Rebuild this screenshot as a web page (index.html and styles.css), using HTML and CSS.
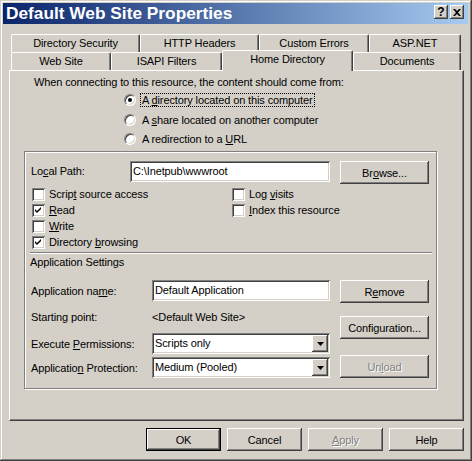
FILE: index.html
```html
<!DOCTYPE html>
<html>
<head>
<meta charset="utf-8">
<link rel="stylesheet" href="styles.css">
</head>
<body>
<div class="window">
  <div class="titlebar">
    <span class="title">Default Web Site Properties</span>
    <div class="cap-btns">
      <span class="cap-btn help">?</span>
      <span class="cap-btn"><svg width="8" height="7" viewBox="0 0 8 7"><path d="M0 0h2l2 2 2-2h2L5 3.5 8 7H6L4 5 2 7H0l3-3.5z" fill="#000"/></svg></span>
    </div>
  </div>

  <div class="tabctl">
    <div class="tab-row">
      <div class="tab w-ds">Directory Security</div>
      <div class="tab w-hh">HTTP Headers</div>
      <div class="tab w-ce">Custom Errors</div>
      <div class="tab w-asp">ASP.NET</div>
    </div>
    <div class="tab-row front">
      <div class="tab w-ws">Web Site</div>
      <div class="tab w-isapi">ISAPI Filters</div>
      <div class="tab w-home selected">Home Directory</div>
      <div class="tab w-docs">Documents</div>
    </div>

    <div class="panel">
      <div class="intro">When connecting to this resource, the content should come from:</div>
      <div class="radios">
        <div class="radio-row r1"><span class="radio on"></span><span class="rlabel focus">A <u>d</u>irectory located on this computer</span></div>
        <div class="radio-row r2"><span class="radio"></span><span class="rlabel">A <u>s</u>hare located on another computer</span></div>
        <div class="radio-row r3"><span class="radio"></span><span class="rlabel">A redirection to a <u>U</u>RL</span></div>
      </div>

      <div class="group">
        <div class="path-row">
          <span class="path-label">Lo<u>c</u>al Path:</span>
          <div class="textbox path-box">C:\Inetpub\wwwroot</div>
          <div class="btn side-btn">Br<u>o</u>wse...</div>
        </div>

        <div class="checks">
          <div class="check"><span class="box"></span><span>Scrip<u>t</u> source access</span></div>
          <div class="check"><span class="box on"><svg width="13" height="13" viewBox="0 0 13 13"><path d="M3 5l2 2 4-4v2l-4 4-2-2z" fill="#000"/></svg></span><span><u>R</u>ead</span></div>
          <div class="check"><span class="box"></span><span><u>W</u>rite</span></div>
          <div class="check"><span class="box on"><svg width="13" height="13" viewBox="0 0 13 13"><path d="M3 5l2 2 4-4v2l-4 4-2-2z" fill="#000"/></svg></span><span>Directory <u>b</u>rowsing</span></div>
          <div class="check"><span class="box"></span><span>Log <u>v</u>isits</span></div>
          <div class="check"><span class="box"></span><span><u>I</u>ndex this resource</span></div>
        </div>

        <div class="separator"></div>
        <div class="section-title">Application Settings</div>

        <div class="settings">
          <div class="set-fields">
            <div class="set-row">
              <span class="set-label">Application na<u>m</u>e:</span>
              <div class="textbox set-box">Default Application</div>
            </div>
            <div class="set-row tall">
              <span class="set-label">Starting point:</span>
              <span class="set-value">&lt;Default Web Site&gt;</span>
            </div>
            <div class="set-row">
              <span class="set-label">Execute <u>P</u>ermissions:</span>
              <div class="combo set-box"><span class="combo-text">Scripts only</span><span class="combo-btn"><svg width="7" height="4" viewBox="0 0 7 4"><path d="M0 0h7L3.5 4z" fill="#000"/></svg></span></div>
            </div>
            <div class="set-row gap3">
              <span class="set-label">Applicatio<u>n</u> Protection:</span>
              <div class="combo set-box"><span class="combo-text">Medium (Pooled)</span><span class="combo-btn"><svg width="7" height="4" viewBox="0 0 7 4"><path d="M0 0h7L3.5 4z" fill="#000"/></svg></span></div>
            </div>
          </div>
          <div class="set-buttons">
            <div class="btn side-btn">R<u>e</u>move</div>
            <div class="btn side-btn config">Confi<u>g</u>uration...</div>
            <div class="btn side-btn unload disabled">Un<u>l</u>oad</div>
          </div>
        </div>
      </div>
    </div>
  </div>

  <div class="dlg-buttons">
    <div class="btn dlg-btn default">OK</div>
    <div class="btn dlg-btn">Cancel</div>
    <div class="btn dlg-btn disabled"><u>A</u>pply</div>
    <div class="btn dlg-btn">Help</div>
  </div>
</div>
</body>
</html>
```
FILE: styles.css
```css
* { box-sizing: border-box; }
html, body { margin: 0; padding: 0; }
body {
  width: 472px;
  height: 461px;
  overflow: hidden;
  background: #D4D0C8;
  font-family: "Liberation Sans", Arial, sans-serif;
  font-size: 11px;
  letter-spacing: -0.12px;
  color: #000;
}
u { text-decoration: underline; text-underline-offset: 1px; }

.window {
  width: 472px;
  height: 461px;
  padding: 3px 4px 4px 3px;
  background: #D4D0C8;
  box-shadow: inset -1px -1px 0 #404040, inset 1px 1px 0 #D4D0C8,
              inset -2px -2px 0 #808080, inset 2px 2px 0 #fff;
  display: flex;
  flex-direction: column;
}

/* title bar */
.titlebar {
  height: 21px;
  display: flex;
  align-items: flex-start;
  padding: 0 4px 0 3px;
  background: linear-gradient(to right, #0A246A, #A6CAF0);
}
.title {
  flex: 1;
  color: #fff;
  font-weight: bold;
  font-size: 17.3px;
  letter-spacing: 0;
  line-height: 21px;
  white-space: nowrap;
}
.cap-btns { display: flex; gap: 2px; margin-top: 2px; }
.cap-btn {
  width: 14px;
  height: 14px;
  background: #D4D0C8;
  box-shadow: inset -1px -1px 0 #404040, inset 1px 1px 0 #fff,
              inset -2px -2px 0 #808080;
  display: flex;
  align-items: center;
  justify-content: center;
}
.cap-btn.help { font-weight: bold; font-size: 12px; line-height: 14px; letter-spacing: 0; }

/* tabs */
.tabctl { margin: 10px 0 0 6px; width: 455px; }
.tab-row { display: flex; align-items: flex-end; padding-left: 2px; }
.tab {
  height: 18px;
  border-top: 1px solid #fff;
  border-left: 1px solid #fff;
  border-right: 1px solid #404040;
  border-radius: 2px 2px 0 0;
  box-shadow: inset -1px 0 0 #808080;
  background: #D4D0C8;
  text-align: center;
  line-height: 17px;
  white-space: nowrap;
}
.tab.selected {
  height: 21px;
  margin-top: -2px;
  margin-bottom: -1px;
  position: relative;
  z-index: 2;
  line-height: 17px;
}
.w-ds { width: 129px; }
.w-hh { width: 119px; }
.w-ce { width: 110px; }
.w-asp { width: 92px; }
.w-ws { width: 100px; }
.w-isapi { width: 111px; }
.w-home { width: 131px; }
.w-docs { width: 108px; }

.panel {
  height: 351px;
  border-top: 1px solid #fff;
  border-left: 1px solid #fff;
  border-right: 1px solid #404040;
  border-bottom: 1px solid #404040;
  box-shadow: inset -1px -1px 0 #808080;
}
.intro { padding: 5px 0 0 24px; line-height: 13px; }

.radios { padding-left: 114px; }
.radio-row { display: flex; align-items: center; height: 14px; gap: 4px; }
.r1 { margin-top: 4px; }
.r2 { margin-top: 6px; }
.r3 { margin-top: 5px; }
.radio {
  position: relative;
  width: 12px;
  height: 12px;
  border-radius: 50%;
  background: #fff;
  border: 1px solid;
  border-color: #808080 #fff #fff #808080;
  box-shadow: inset 1px 1px 0 #404040, inset -1px -1px 0 #D4D0C8;
}
.radio.on::after {
  content: "";
  position: absolute;
  left: 3px;
  top: 3px;
  width: 4px;
  height: 4px;
  border-radius: 50%;
  background: #000;
}
.rlabel {
  border: 1px solid transparent;
  padding: 0 1px;
  line-height: 12px;
  white-space: nowrap;
}
.rlabel.focus { border: 1px dotted #000; }

/* group box */
.group {
  margin: 5px 0 0 14px;
  width: 413px;
  border: 1px solid #808080;
  box-shadow: inset 1px 1px 0 #fff, 1px 1px 0 #fff;
  padding-bottom: 10px;
}
.path-row { display: flex; align-items: flex-start; margin: 9px 0 0 6px; }
.path-label { width: 99px; line-height: 21px; }
.path-box { width: 200px; margin-right: 10px; }

.textbox {
  height: 21px;
  background: #fff;
  box-shadow: inset 1px 1px 0 #808080, inset -1px -1px 0 #fff,
              inset 2px 2px 0 #404040, inset -2px -2px 0 #D4D0C8;
  padding: 0 3px;
  line-height: 21px;
  white-space: nowrap;
}

.btn {
  height: 23px;
  background: #D4D0C8;
  box-shadow: inset -1px -1px 0 #404040, inset 1px 1px 0 #fff,
              inset -2px -2px 0 #808080;
  display: flex;
  align-items: center;
  justify-content: center;
  white-space: nowrap;
}
.btn.default {
  border: 1px solid #000;
}
.side-btn { width: 89px; }
.disabled { color: #808080; text-shadow: 1px 1px 0 #fff; }

.checks {
  display: grid;
  grid-template-columns: 200px auto;
  grid-template-rows: repeat(4, 16px);
  grid-auto-flow: column;
  margin: 2px 0 0 7px;
}
.check { display: flex; align-items: center; gap: 4px; white-space: nowrap; }
.box {
  width: 13px;
  height: 13px;
  background: #fff;
  box-shadow: inset 1px 1px 0 #808080, inset -1px -1px 0 #fff,
              inset 2px 2px 0 #404040, inset -2px -2px 0 #D4D0C8;
}
.box svg { display: block; }

.separator {
  margin: 2px 4px 0 5px;
  height: 2px;
  border-top: 1px solid #808080;
  border-bottom: 1px solid #fff;
}
.section-title { margin: 2px 0 0 5px; line-height: 13px; }

.settings { display: flex; margin: 11px 0 0 6px; }
.set-fields { width: 299px; margin-right: 10px; }
.set-row { display: flex; align-items: center; height: 21px; }
.set-row.tall { height: 32px; }
.set-row.gap3 { margin-top: 3px; }
.set-label { width: 121px; white-space: nowrap; }
.set-value { white-space: nowrap; }
.set-box { width: 178px; }

.combo {
  display: flex;
  height: 21px;
  padding: 2px;
  background: #fff;
  box-shadow: inset 1px 1px 0 #808080, inset -1px -1px 0 #fff,
              inset 2px 2px 0 #404040, inset -2px -2px 0 #D4D0C8;
}
.combo-text { flex: 1; line-height: 17px; padding-left: 1px; white-space: nowrap; }
.combo-btn {
  width: 16px;
  height: 17px;
  background: #D4D0C8;
  box-shadow: inset -1px -1px 0 #404040, inset 1px 1px 0 #fff,
              inset -2px -2px 0 #808080;
  display: flex;
  align-items: center;
  justify-content: center;
}
.combo-btn svg { display: block; }

.set-buttons { display: flex; flex-direction: column; }
.config { margin-top: 13px; }
.unload { margin-top: 16px; }

/* dialog buttons */
.dlg-buttons {
  display: flex;
  justify-content: flex-end;
  gap: 6px;
  margin-top: 7px;
  padding-right: 4px;
}
.dlg-btn { width: 75px; }
```
